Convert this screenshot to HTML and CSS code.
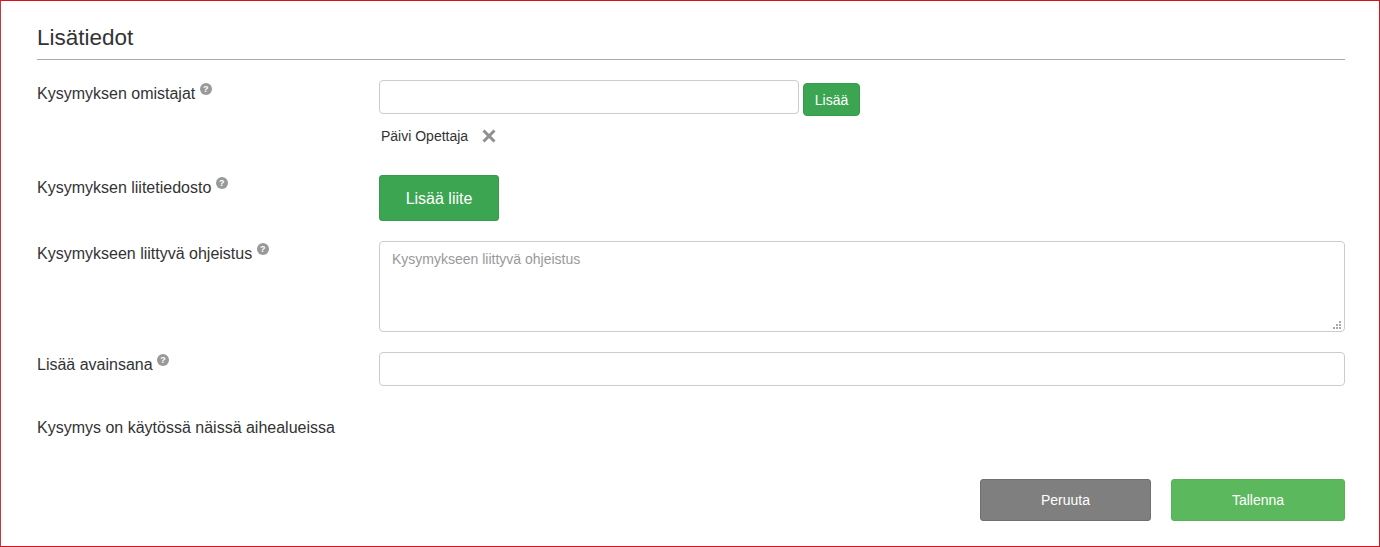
FILE: index.html
```html
<!DOCTYPE html>
<html>
<head>
    <title>Lisätiedot</title>
    <link rel="stylesheet" href="styles.css">
</head>
<body>
    <form class="panel">
        <h2 class="panel-title">Lisätiedot</h2>

        <div class="form-row owners-row">
            <label class="row-label owners-label">Kysymyksen omistajat <span class="help">?</span></label>
            <div>
                <div class="owner-input">
                    <input type="text" class="text-input owner-field">
                    <button type="button" class="btn btn-green btn-small">Lisää</button>
                </div>
                <div class="owner-chip">
                    <span>Päivi Opettaja</span>
                    <svg class="remove-icon" viewBox="0 0 14 14" width="14" height="14">
                        <path d="M1.5 1.5 L12.5 12.5 M12.5 1.5 L1.5 12.5" stroke="#8f8f8f" stroke-width="3" fill="none"/>
                    </svg>
                </div>
            </div>
        </div>

        <div class="form-row attachment-row">
            <label class="row-label">Kysymyksen liitetiedosto <span class="help">?</span></label>
            <div>
                <button type="button" class="btn btn-green btn-attach">Lisää liite</button>
            </div>
        </div>

        <div class="form-row guide-row">
            <label class="row-label">Kysymykseen liittyvä ohjeistus <span class="help">?</span></label>
            <div class="guide-wrap">
                <textarea class="text-input guide-field" placeholder="Kysymykseen liittyvä ohjeistus"></textarea>
                <svg class="grip" viewBox="0 0 8 8" width="8" height="8">
                    <path d="M6 0h2v2h-2z M3 3h2v2h-2z M6 3h2v2h-2z M0 6h2v2h-2z M3 6h2v2h-2z M6 6h2v2h-2z" fill="#a8a8a8"/>
                </svg>
            </div>
        </div>

        <div class="form-row keyword-row">
            <label class="row-label">Lisää avainsana <span class="help">?</span></label>
            <input type="text" class="text-input">
        </div>

        <div class="usage-row">Kysymys on käytössä näissä aihealueissa</div>

        <div class="form-actions">
            <button type="button" class="btn btn-cancel">Peruuta</button>
            <button type="button" class="btn btn-save">Tallenna</button>
        </div>
    </form>
</body>
</html>
```

FILE: styles.css
```css
html, body { margin: 0; padding: 0; background: #fff; }
body { font-family: "Liberation Sans", Arial, sans-serif; color: #333; font-size: 16px; }

.panel {
    box-sizing: border-box;
    width: 1380px;
    height: 547px;
    padding: 24px 34px 0 36px;
    border: 1px solid #d3161c;
    border-left-color: #c23a3a;
    background: #fff;
}

.panel-title {
    margin: 0 0 20px 0;
    height: 34px;
    line-height: 26px;
    font-size: 22.5px;
    font-weight: normal;
    color: #333;
    border-bottom: 1px solid #a9a9a9;
}

.form-row {
    display: grid;
    grid-template-columns: 342px 1fr;
}

.row-label { line-height: 17px; padding-top: 2px; }
.owners-label { padding-top: 3px; }

.help {
    display: inline-block;
    width: 12px;
    height: 12px;
    border-radius: 50%;
    background: #999;
    color: #fff;
    font-size: 9px;
    font-weight: bold;
    line-height: 12px;
    text-align: center;
    vertical-align: 7px;
}

.text-input {
    box-sizing: border-box;
    display: block;
    width: 100%;
    height: 34px;
    margin: 0;
    padding: 6px 12px;
    border: 1px solid #ccc;
    border-radius: 4px;
    background: #fff;
    font-family: inherit;
    font-size: 14px;
    color: #555;
}
.text-input::placeholder { color: #999; opacity: 1; }

.btn {
    box-sizing: border-box;
    border: 1px solid transparent;
    border-radius: 3px;
    color: #fff;
    font-family: inherit;
    padding: 0;
    text-align: center;
}
.btn-green { background: #3ca551; border-color: #389a4c; }

.owners-row { height: 95px; }
.owner-input { display: flex; gap: 4px; }
.owner-field { width: 420px; }
.btn-small { width: 57px; height: 33px; margin-top: 3px; padding-top: 1px; font-size: 14px; border-radius: 4px; }
.owner-chip {
    display: flex;
    align-items: center;
    gap: 14px;
    margin-top: 12px;
    padding-left: 2px;
    height: 20px;
    font-size: 14px;
    line-height: 14px;
    color: #333;
}
.owner-chip span { margin-top: -5px; }
.remove-icon { margin-top: -5px; }

.attachment-row { height: 66px; }
.btn-attach { width: 120px; height: 46px; padding-top: 2px; font-size: 16px; }

.guide-row { height: 111px; }
.guide-wrap { position: relative; height: 91px; }
.guide-field { height: 91px; padding: 9px 12px; resize: none; }
.grip { position: absolute; right: 4px; bottom: 3px; }

.keyword-row { height: 34px; }

.usage-row { margin-top: 33px; line-height: 17px; }

.form-actions {
    display: flex;
    justify-content: flex-end;
    gap: 20px;
    margin-top: 43px;
}
.btn-cancel { width: 171px; height: 42px; font-size: 14px; background: #7f7f7f; border-color: #6f6f6f; }
.btn-save { width: 174px; height: 42px; font-size: 14px; background: #5cb85c; border-color: #57b257; }
```
